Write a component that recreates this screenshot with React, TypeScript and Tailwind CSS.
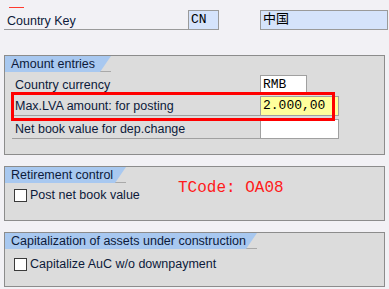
const sans = { fontFamily: '"Liberation Sans", "Noto Sans CJK SC", sans-serif' }

function Tab({ title, width }: { title: string; width: number }) {
  return (
    <div className="h-[16px] border-b border-[#a9a9a9]" style={{ width }}>
      <div className="h-[16px] bg-[#a8c8f0] pl-[6px] text-[12.5px] leading-[16px] text-[#0c1a3a] [clip-path:polygon(0_0,100%_0,calc(100%-11px)_100%,0_100%)]">
        {title}
      </div>
    </div>
  )
}

function FieldRow({ label, children }: { label: string; children: React.ReactNode }) {
  return (
    <div className="flex h-[20px] items-end">
      <div className="w-[248px] h-[20px] border-b border-[#a0a0a0] pl-[3px] text-[12.5px] leading-[20px] text-[#0c1a3a]">
        {label}
      </div>
      {children}
    </div>
  )
}

function Check({ label }: { label: string }) {
  return (
    <div className="flex items-center gap-[3px] pl-[9px]">
      <div className="h-[13px] w-[13px] border border-[#3a3a3a] bg-white" />
      <span className="text-[12.5px] leading-[14px] text-[#0c1a3a]">{label}</span>
    </div>
  )
}

export default function App() {
  const mono = { fontFamily: '"Liberation Mono", "Noto Sans CJK SC", monospace' }
  return (
    <div className="relative h-[289px] w-[389px] overflow-hidden bg-[#f2f1f5]" style={sans}>
      {/* header fields */}
      <div className="ml-[9px] mt-[7px] h-[1px] w-[15px] bg-[#ff3b2f]" />
      <div className="ml-[4px] mt-[2px] flex h-[20px] items-end">
        <div className="h-[20px] w-[184px] border-b border-[#9a9a9a] pl-[3px] text-[12.5px] leading-[22px] text-[#0c1a3a]">
          Country Key
        </div>
        <div className="h-[20px] w-[31px] border border-[#9a9a9a] bg-[#d5e3fb] pl-[2px] text-[13px] leading-[18px] text-black" style={mono}>
          CN
        </div>
        <div className="ml-[41px] h-[20px] w-[128px] border border-[#9a9a9a] bg-[#d5e3fb] pl-[2px] text-[13px] leading-[18px] text-black" style={mono}>
          中国
        </div>
      </div>

      {/* Amount entries */}
      <div className="mx-[4px] mt-[25px] h-[100px] border border-[#8c8c8c] bg-[#dcdcdc]">
        <Tab title="Amount entries" width={106} />
        <div className="mt-[3px] flex flex-col gap-[1px] pl-[7px]">
          <FieldRow label="Country currency">
            <div className="h-[20px] w-[47px] border border-[#a0a0a0] bg-white pl-[2px] text-[13px] leading-[18px] text-black" style={mono}>
              RMB
            </div>
          </FieldRow>
          <FieldRow label="Max.LVA amount: for posting">
            <div className="h-[20px] w-[79px] border border-[#a0a0a0] bg-[#ffff9c] pl-[2px] text-[13px] leading-[18px] text-black" style={mono}>
              2.000,00
            </div>
          </FieldRow>
          <div className="h-[1px]" />
          <FieldRow label="Net book value for dep.change">
            <div className="h-[20px] w-[79px] border border-[#a0a0a0] bg-white" />
          </FieldRow>
        </div>
      </div>

      {/* Retirement control */}
      <div className="mx-[4px] mt-[11px] h-[55px] border border-[#8c8c8c] bg-[#dcdcdc]">
        <Tab title="Retirement control" width={121} />
        <div className="mt-[5px]">
          <Check label="Post net book value" />
        </div>
      </div>

      {/* Capitalization of assets under construction */}
      <div className="mx-[4px] mt-[11px] h-[55px] border border-[#8c8c8c] bg-[#dcdcdc]">
        <Tab title="Capitalization of assets under construction" width={252} />
        <div className="mt-[8px]">
          <Check label="Capitalize AuC w/o downpayment" />
        </div>
      </div>

      {/* annotations */}
      <div className="absolute left-[11px] top-[92px] h-[29px] w-[324px] border-[3px] border-[#ff0000]" />
      <div className="absolute left-[178px] top-[179px] text-[16px] leading-[18px] text-[#ff1a1a]" style={mono}>
        TCode: OA08
      </div>
    </div>
  )
}
